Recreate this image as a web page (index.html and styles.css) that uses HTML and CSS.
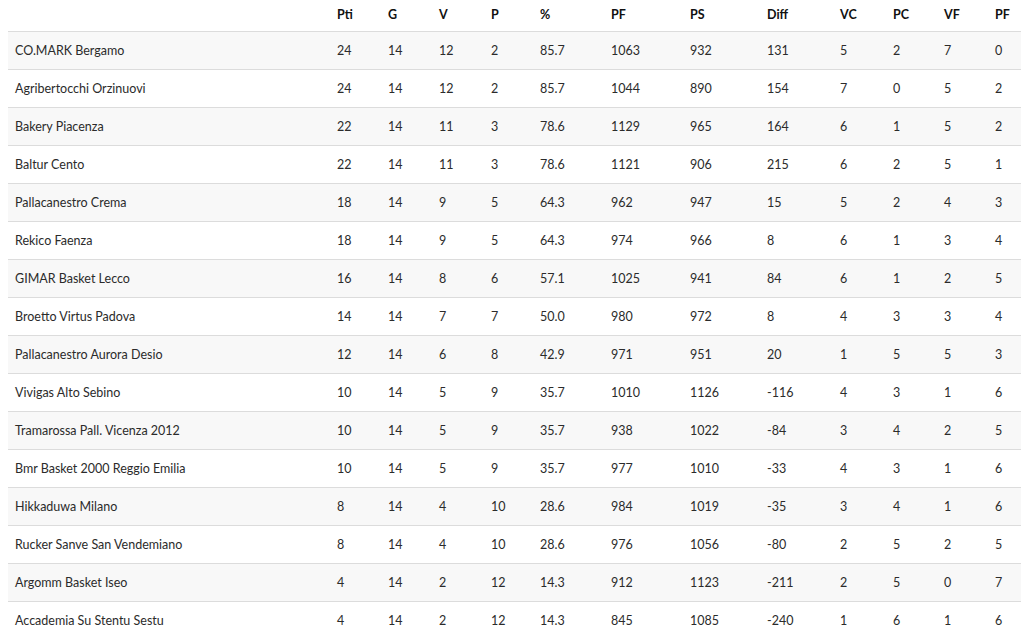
FILE: index.html
```html
<!DOCTYPE html>
<html lang="it">
<head>
<meta charset="utf-8">
<title>Classifica</title>
<link rel="stylesheet" href="styles.css">
</head>
<body>
<table class="standings">
  <colgroup>
    <col class="c-team"><col class="c-pti"><col class="c-g"><col class="c-v"><col class="c-p"><col class="c-pct"><col class="c-pf"><col class="c-ps"><col class="c-diff"><col class="c-vc"><col class="c-pc"><col class="c-vf"><col class="c-pf2">
  </colgroup>
  <thead>
    <tr><th></th><th>Pti</th><th>G</th><th>V</th><th>P</th><th>%</th><th>PF</th><th>PS</th><th>Diff</th><th>VC</th><th>PC</th><th>VF</th><th>PF</th></tr>
  </thead>
  <tbody>
    <tr><td>CO.MARK Bergamo</td><td>24</td><td>14</td><td>12</td><td>2</td><td>85.7</td><td>1063</td><td>932</td><td>131</td><td>5</td><td>2</td><td>7</td><td>0</td></tr>
    <tr><td>Agribertocchi Orzinuovi</td><td>24</td><td>14</td><td>12</td><td>2</td><td>85.7</td><td>1044</td><td>890</td><td>154</td><td>7</td><td>0</td><td>5</td><td>2</td></tr>
    <tr><td>Bakery Piacenza</td><td>22</td><td>14</td><td>11</td><td>3</td><td>78.6</td><td>1129</td><td>965</td><td>164</td><td>6</td><td>1</td><td>5</td><td>2</td></tr>
    <tr><td>Baltur Cento</td><td>22</td><td>14</td><td>11</td><td>3</td><td>78.6</td><td>1121</td><td>906</td><td>215</td><td>6</td><td>2</td><td>5</td><td>1</td></tr>
    <tr><td>Pallacanestro Crema</td><td>18</td><td>14</td><td>9</td><td>5</td><td>64.3</td><td>962</td><td>947</td><td>15</td><td>5</td><td>2</td><td>4</td><td>3</td></tr>
    <tr><td>Rekico Faenza</td><td>18</td><td>14</td><td>9</td><td>5</td><td>64.3</td><td>974</td><td>966</td><td>8</td><td>6</td><td>1</td><td>3</td><td>4</td></tr>
    <tr><td>GIMAR Basket Lecco</td><td>16</td><td>14</td><td>8</td><td>6</td><td>57.1</td><td>1025</td><td>941</td><td>84</td><td>6</td><td>1</td><td>2</td><td>5</td></tr>
    <tr><td>Broetto Virtus Padova</td><td>14</td><td>14</td><td>7</td><td>7</td><td>50.0</td><td>980</td><td>972</td><td>8</td><td>4</td><td>3</td><td>3</td><td>4</td></tr>
    <tr><td>Pallacanestro Aurora Desio</td><td>12</td><td>14</td><td>6</td><td>8</td><td>42.9</td><td>971</td><td>951</td><td>20</td><td>1</td><td>5</td><td>5</td><td>3</td></tr>
    <tr><td>Vivigas Alto Sebino</td><td>10</td><td>14</td><td>5</td><td>9</td><td>35.7</td><td>1010</td><td>1126</td><td>-116</td><td>4</td><td>3</td><td>1</td><td>6</td></tr>
    <tr><td>Tramarossa Pall. Vicenza 2012</td><td>10</td><td>14</td><td>5</td><td>9</td><td>35.7</td><td>938</td><td>1022</td><td>-84</td><td>3</td><td>4</td><td>2</td><td>5</td></tr>
    <tr><td>Bmr Basket 2000 Reggio Emilia</td><td>10</td><td>14</td><td>5</td><td>9</td><td>35.7</td><td>977</td><td>1010</td><td>-33</td><td>4</td><td>3</td><td>1</td><td>6</td></tr>
    <tr><td>Hikkaduwa Milano</td><td>8</td><td>14</td><td>4</td><td>10</td><td>28.6</td><td>984</td><td>1019</td><td>-35</td><td>3</td><td>4</td><td>1</td><td>6</td></tr>
    <tr><td>Rucker Sanve San Vendemiano</td><td>8</td><td>14</td><td>4</td><td>10</td><td>28.6</td><td>976</td><td>1056</td><td>-80</td><td>2</td><td>5</td><td>2</td><td>5</td></tr>
    <tr><td>Argomm Basket Iseo</td><td>4</td><td>14</td><td>2</td><td>12</td><td>14.3</td><td>912</td><td>1123</td><td>-211</td><td>2</td><td>5</td><td>0</td><td>7</td></tr>
    <tr><td>Accademia Su Stentu Sestu</td><td>4</td><td>14</td><td>2</td><td>12</td><td>14.3</td><td>845</td><td>1085</td><td>-240</td><td>1</td><td>6</td><td>1</td><td>6</td></tr>
  </tbody>
</table>
</body>
</html>
```
FILE: styles.css
```css
html, body {
  margin: 0;
  padding: 0;
  background: #fff;
  overflow: hidden;
}
body {
  padding-left: 8px;
  font-family: "Lato", "Liberation Sans", sans-serif;
  font-size: 12.5px;
  color: #2b2b2b;
}
.standings {
  border-collapse: collapse;
  table-layout: fixed;
  width: 1013px;
}
.c-team { width: 322px; }
.c-pti { width: 51px; }
.c-g { width: 51px; }
.c-v { width: 52px; }
.c-p { width: 49px; }
.c-pct { width: 71px; }
.c-pf { width: 79px; }
.c-ps { width: 77px; }
.c-diff { width: 73px; }
.c-vc { width: 53px; }
.c-pc { width: 51px; }
.c-vf { width: 51px; }
.c-pf2 { width: 33px; }

.standings th,
.standings td {
  text-align: left;
  padding: 0 0 0 7px;
  white-space: nowrap;
  overflow: hidden;
}
.standings th {
  height: 28px;
  padding-bottom: 3px;
  font-weight: 700;
  color: #111;
  vertical-align: middle;
}
.standings td {
  height: 37px;
  border-top: 1px solid #dcdcdc;
  vertical-align: middle;
}
.standings tbody tr:nth-child(odd) td {
  background: #f8f8f8;
}
```
